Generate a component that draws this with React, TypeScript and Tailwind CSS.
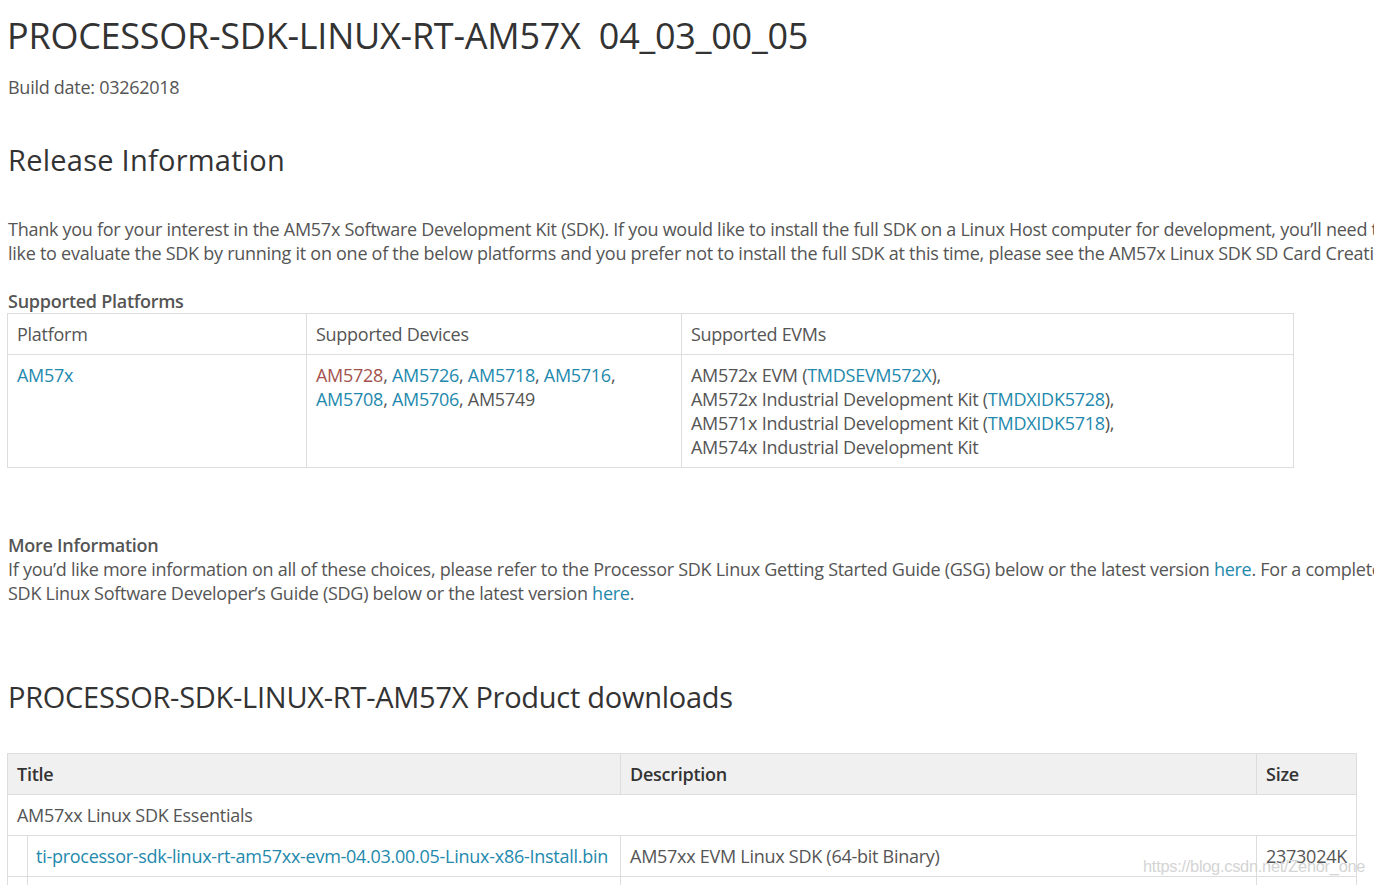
const link = "text-[#2389ad]";

const App = () => {
  return (
    <div
      className="relative w-[1374px] h-[885px] overflow-hidden bg-white text-[#555] text-[18px] leading-[24px] tracking-[-0.27px]"
      style={{ fontFamily: '"Open Sans", "Noto Sans", sans-serif' }}
    >
      <div className="pl-[7px] pt-[14px]">
        <h1 className="text-[36px] leading-[44px] text-[#333] whitespace-pre tracking-[-0.25px]">
          PROCESSOR-SDK-LINUX-RT-AM57X  04_03_00_05
        </h1>
        <p className="mt-[17px] pl-px">Build date: 03262018</p>

        <h2 className="mt-[43px] text-[29px] leading-[36px] text-[#333] font-medium tracking-[0.25px] pl-px">
          Release Information
        </h2>

        <p className="mt-[39px] pl-px whitespace-nowrap">
          Thank you for your interest in the AM57x Software Development Kit (SDK). If you would like to install the full SDK on a Linux Host computer for development, you’ll need to download the installer below. If you would
          <br />
          like to evaluate the SDK by running it on one of the below platforms and you prefer not to install the full SDK at this time, please see the AM57x Linux SDK SD Card Creation Guide.
        </p>

        <h3 className="mt-[24px] font-semibold pl-px">Supported Platforms</h3>
        <table className="w-[1287px] border-collapse table-fixed">
          <colgroup>
            <col className="w-[299px]" />
            <col className="w-[375px]" />
            <col />
          </colgroup>
          <thead>
            <tr>
              <th className="border border-[#ddd] px-[9px] py-[8px] text-left font-normal">Platform</th>
              <th className="border border-[#ddd] px-[9px] py-[8px] text-left font-normal">Supported Devices</th>
              <th className="border border-[#ddd] px-[9px] py-[8px] text-left font-normal">Supported EVMs</th>
            </tr>
          </thead>
          <tbody>
            <tr className="align-top">
              <td className="border border-[#ddd] px-[9px] py-[8px]">
                <span className={link}>AM57x</span>
              </td>
              <td className="border border-[#ddd] px-[9px] py-[8px]">
                <span className="text-[#a3524e]">AM5728</span>, <span className={link}>AM5726</span>,{" "}
                <span className={link}>AM5718</span>, <span className={link}>AM5716</span>,
                <br />
                <span className={link}>AM5708</span>, <span className={link}>AM5706</span>, AM5749
              </td>
              <td className="border border-[#ddd] px-[9px] py-[8px]">
                AM572x EVM (<span className={link}>TMDSEVM572X</span>),
                <br />
                AM572x Industrial Development Kit (<span className={link}>TMDXIDK5728</span>),
                <br />
                AM571x Industrial Development Kit (<span className={link}>TMDXIDK5718</span>),
                <br />
                AM574x Industrial Development Kit
              </td>
            </tr>
          </tbody>
        </table>

        <h3 className="mt-[65px] font-semibold pl-px">More Information</h3>
        <p className="pl-px whitespace-nowrap">
          If you’d like more information on all of these choices, please refer to the Processor SDK Linux Getting Started Guide (GSG) below or the latest version{" "}
          <span className={link}>here</span>. For a complete reference, please refer to the Processor
          <br />
          SDK Linux Software Developer’s Guide (SDG) below or the latest version <span className={link}>here</span>.
        </p>

        <h2 className="mt-[74px] text-[29px] leading-[36px] text-[#333] font-medium pl-px">
          PROCESSOR-SDK-LINUX-RT-AM57X Product downloads
        </h2>

        <table className="mt-[38px] w-[1350px] border-collapse table-fixed">
          <colgroup>
            <col className="w-[20px]" />
            <col className="w-[593px]" />
            <col className="w-[636px]" />
            <col />
          </colgroup>
          <thead>
            <tr className="bg-[#f0f0f0] text-[#333]">
              <th colSpan={2} className="border border-[#ddd] px-[9px] py-[8px] text-left font-semibold">Title</th>
              <th className="border border-[#ddd] px-[9px] py-[8px] text-left font-semibold">Description</th>
              <th className="border border-[#ddd] px-[9px] py-[8px] text-left font-semibold">Size</th>
            </tr>
          </thead>
          <tbody>
            <tr>
              <td colSpan={4} className="border border-[#ddd] px-[9px] py-[8px]">AM57xx Linux SDK Essentials</td>
            </tr>
            <tr>
              <td className="border border-[#ddd] py-[8px]"></td>
              <td className="border border-[#ddd] px-[8px] py-[8px] whitespace-nowrap">
                <span className={link}>ti-processor-sdk-linux-rt-am57xx-evm-04.03.00.05-Linux-x86-Install.bin</span>
              </td>
              <td className="border border-[#ddd] px-[9px] py-[8px]">AM57xx EVM Linux SDK (64-bit Binary)</td>
              <td className="border border-[#ddd] px-[9px] py-[8px]">2373024K</td>
            </tr>
            <tr>
              <td className="border border-[#ddd] py-[8px]">&nbsp;</td>
              <td className="border border-[#ddd] px-[8px] py-[8px]"></td>
              <td className="border border-[#ddd] px-[9px] py-[8px]"></td>
              <td className="border border-[#ddd] px-[9px] py-[8px]"></td>
            </tr>
          </tbody>
        </table>
      </div>

      <div
        className="absolute left-[1143px] top-[856px] text-[16.4px] leading-[20px] text-[#d4d4d4]"
        style={{ fontFamily: '"Liberation Sans", Arial, sans-serif' }}
      >
        https://blog.csdn.net/Zenor_one
      </div>
    </div>
  );
};

export default App;
